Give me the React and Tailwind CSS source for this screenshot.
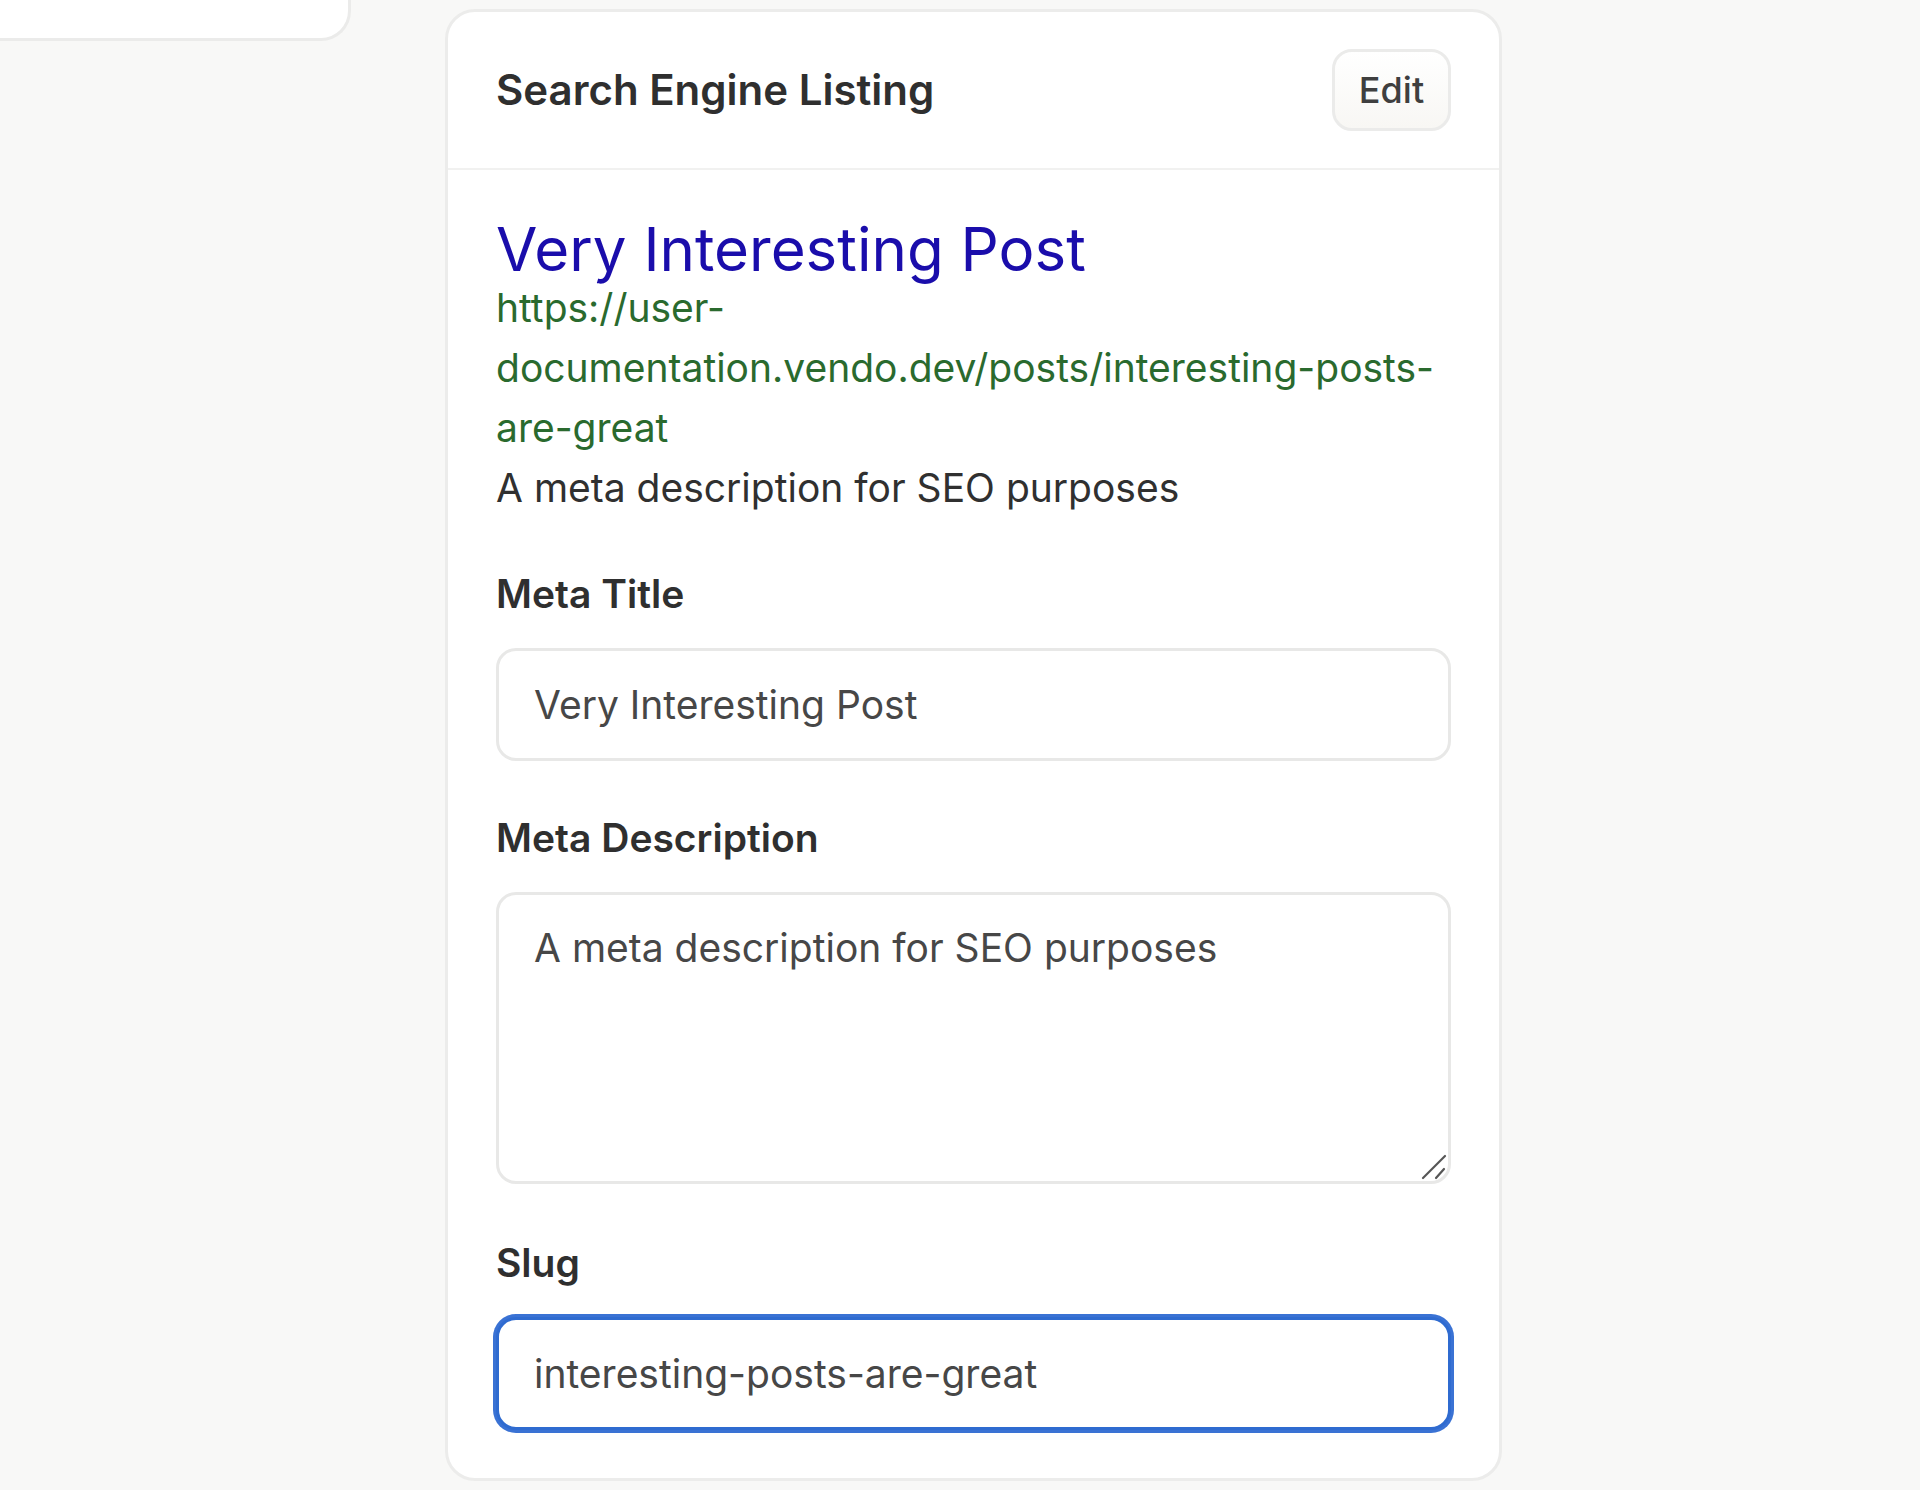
import React from "react";

export default function App() {
  return (
    <div className="min-h-[1490px] w-[1920px] bg-[#f8f8f7] flex items-start font-['Inter',_'Noto_Sans',_sans-serif]">
      {/* left partial card */}
      <div className="w-[351px] shrink-0">
        <div className="h-[41px] bg-white border-r-[3px] border-b-[3px] border-[#ebebea] rounded-br-[30px]" />
      </div>

      {/* main card */}
      <div className="ml-[94px] mt-[9px] w-[1057px] bg-white border-[3px] border-[#ececeb] rounded-[30px]">
        {/* header */}
        <div className="h-[158px] px-[48px] flex items-center justify-between border-b-[2px] border-[#f1f1f0]">
          <h2 className="text-[42px] leading-[60px] font-semibold text-[#2f2f2f]">
            Search Engine Listing
          </h2>
          <button className="h-[82px] w-[119px] rounded-[20px] border-[3px] border-[#ebebea] bg-gradient-to-b from-white to-[#f8f7f4] text-[36px] font-medium text-[#3f3f3f] flex items-center justify-center">
            Edit
          </button>
        </div>

        {/* body */}
        <div className="px-[48px] pt-[50px] pb-[48px]">
          <div className="text-[60px] leading-[58px] text-[#1a0dab]">Very Interesting Post</div>
          <div className="text-[39px] leading-[60px] text-[#2a6a2e] whitespace-nowrap">
            <div>https://user-</div>
            <div>documentation.vendo.dev/posts/interesting-posts-</div>
            <div>are-great</div>
          </div>
          <div className="text-[39px] leading-[60px] text-[#303030]">
            A meta description for SEO purposes
          </div>

          <div className="mt-[46px] flex flex-col gap-[24px]">
            <label className="text-[39px] leading-[60px] font-semibold text-[#2f2f2f]">Meta Title</label>
            <input
              readOnly
              value="Very Interesting Post"
              className="h-[113px] w-full rounded-[20px] border-[3px] border-[#e8e8e7] px-[35px] text-[39px] leading-[60px] text-[#474747] outline-none bg-white"
            />
          </div>

          <div className="mt-[47px] flex flex-col gap-[24px]">
            <label className="text-[39px] leading-[60px] font-semibold text-[#2f2f2f]">Meta Description</label>
            <div className="relative">
              <textarea
                readOnly
                value="A meta description for SEO purposes"
                className="block h-[292px] w-full resize-none rounded-[20px] border-[3px] border-[#e8e8e7] px-[35px] pt-[23px] text-[39px] leading-[60px] text-[#474747] outline-none bg-white"
              />
              <svg
                className="absolute right-[4px] bottom-[4px] pointer-events-none"
                width="26"
                height="26"
                viewBox="0 0 26 26"
              >
                <line x1="2" y1="24" x2="24" y2="2" stroke="#555" strokeWidth="2.2" strokeLinecap="round" />
                <line x1="15" y1="24" x2="23" y2="15" stroke="#555" strokeWidth="2.2" strokeLinecap="round" />
              </svg>
            </div>
          </div>

          <div className="mt-[49px] flex flex-col gap-[24px]">
            <label className="text-[39px] leading-[60px] font-semibold text-[#2f2f2f]">Slug</label>
            <input
              readOnly
              value="interesting-posts-are-great"
              className="h-[113px] w-full rounded-[20px] border-[3px] border-[#2f6bd0] shadow-[0_0_0_3px_#3a72d4] px-[35px] text-[39px] leading-[60px] text-[#474747] outline-none bg-white"
            />
          </div>
        </div>
      </div>
    </div>
  );
}
